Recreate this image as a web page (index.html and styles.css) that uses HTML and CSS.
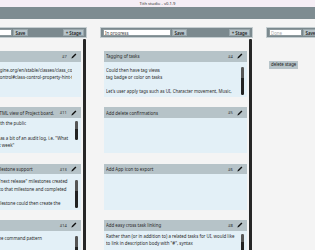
FILE: index.html
```html
<!DOCTYPE html>
<html>
<head>
<meta charset="utf-8">
<link rel="stylesheet" href="styles.css">
</head>
<body>
<div class="titlebar">Tith studio - v0.1.9</div>
<div class="toolbar"></div>
<div class="board">
  <section class="column">
    <div class="stage-head">
      <div class="stage-name stage-name-wide">Backlog</div>
      <div class="btn">Save</div>
      <div class="spacer"></div>
      <div class="btn">+ Stage</div>
    </div>
    <div class="stage-body">
      <div class="cards">
        <div class="card">
          <div class="card-head"><span class="card-title">Tooltip hints</span><span class="card-id">#7</span><svg class="pencil" viewBox="0 0 6 6"><path d="M0.4 5.6 L0.9 4.1 L4.4 0.6 L5.4 1.6 L1.9 5.1 Z"/></svg></div>
          <div class="card-body first"><div class="line">Docs at https://docs.godotengine.org/en/stable/classes/class_control.html</div><div class="line">org/en/stable/classes/class_control#class-control-property-hint-tooltip</div></div>
        </div>
        <div class="card">
          <div class="card-head"><span class="card-title">Generate a static read only HTML view of Project board.</span><span class="card-id">#11</span><svg class="pencil" viewBox="0 0 6 6"><path d="M0.4 5.6 L0.9 4.1 L4.4 0.6 L5.4 1.6 L1.9 5.1 Z"/></svg></div>
          <div class="card-body tight"><div class="line">So progress can be shared with the public</div><div class="line">&nbsp;</div><div class="line">The page could also then act as a bit of an audit log, i.e. "What</div><div class="line">changes happened in the last week"</div><span class="inner-scroll short"></span></div>
        </div>
        <div class="card">
          <div class="card-head"><span class="card-title">Add release planning with milestone support</span><span class="card-id">#13</span><svg class="pencil" viewBox="0 0 6 6"><path d="M0.4 5.6 L0.9 4.1 L4.4 0.6 L5.4 1.6 L1.9 5.1 Z"/></svg></div>
          <div class="card-body"><div class="line">This would let the user have "next release" milestones created</div><div class="line">and tasks could be assigned to that milestone and completed</div><div class="line">&nbsp;</div><div class="line">Completing the upcoming milestone could then create the</div><span class="inner-scroll"></span></div>
        </div>
        <div class="card">
          <div class="card-head"><span class="card-title">Undo support</span><span class="card-id">#14</span><svg class="pencil" viewBox="0 0 6 6"><path d="M0.4 5.6 L0.9 4.1 L4.4 0.6 L5.4 1.6 L1.9 5.1 Z"/></svg></div>
          <div class="card-body"><div class="line">Can be implemented using the command pattern</div><span class="inner-scroll"></span></div>
        </div>
      </div>
      <div class="vscroll"></div>
    </div>
  </section>

  <section class="column">
    <div class="stage-head">
      <div class="stage-name">In progress</div>
      <div class="btn">Save</div>
      <div class="spacer"></div>
      <div class="btn">+ Stage</div>
    </div>
    <div class="stage-body">
      <div class="cards">
        <div class="card">
          <div class="card-head"><span class="card-title">Tagging of tasks</span><span class="card-id">#4</span><svg class="pencil" viewBox="0 0 6 6"><path d="M0.4 5.6 L0.9 4.1 L4.4 0.6 L5.4 1.6 L1.9 5.1 Z"/></svg></div>
          <div class="card-body first"><div class="line">Could then have tag views</div><div class="line">tag badge or color on tasks</div><div class="line">&nbsp;</div><div class="line">Let's user apply tags such as UI, Character movement, Music,</div><span class="inner-scroll"></span></div>
        </div>
        <div class="card">
          <div class="card-head"><span class="card-title">Add delete confirmations</span><span class="card-id">#5</span><svg class="pencil" viewBox="0 0 6 6"><path d="M0.4 5.6 L0.9 4.1 L4.4 0.6 L5.4 1.6 L1.9 5.1 Z"/></svg></div>
          <div class="card-body"></div>
        </div>
        <div class="card">
          <div class="card-head"><span class="card-title">Add App icon to export</span><span class="card-id">#6</span><svg class="pencil" viewBox="0 0 6 6"><path d="M0.4 5.6 L0.9 4.1 L4.4 0.6 L5.4 1.6 L1.9 5.1 Z"/></svg></div>
          <div class="card-body"></div>
        </div>
        <div class="card">
          <div class="card-head"><span class="card-title">Add easy cross task linking</span><span class="card-id">#8</span><svg class="pencil" viewBox="0 0 6 6"><path d="M0.4 5.6 L0.9 4.1 L4.4 0.6 L5.4 1.6 L1.9 5.1 Z"/></svg></div>
          <div class="card-body tight"><div class="line">Rather than (or in addition to) a related tasks for UI, would like</div><div class="line">to link in description body with "#", syntax</div><span class="inner-scroll short"></span></div>
        </div>
      </div>
      <div class="vscroll"></div>
    </div>
  </section>

  <section class="column">
    <div class="stage-head">
      <div class="stage-name stage-name-short placeholder">Done</div>
      <div class="btn">Save</div>
      <div class="spacer"></div>
      <div class="btn">+ Stage</div>
    </div>
    <div class="stage-body empty">
      <div class="btn btn-delete">delete stage</div>
    </div>
  </section>
</div>
</body>
</html>
```
FILE: styles.css
```css
* { box-sizing: border-box; margin: 0; padding: 0; }
html, body { width: 315px; height: 250px; overflow: hidden; }
body {
  background: #f4f4f4;
  font-family: "Noto Sans", "Open Sans", sans-serif;
  font-size: 4.4px;
  color: #2a2a2a;
}
.titlebar {
  height: 7px;
  line-height: 7px;
  background: #f5eef5;
  text-align: center;
  font-size: 4.2px;
  color: #333;
}
.toolbar { height: 12px; background: #7e8c91; }
.board {
  display: flex;
  gap: 13px;
  margin-left: -66px;
  padding-top: 8px;
}
.column {
  flex: 0 0 153px;
  width: 153px;
  height: 231px;
  display: flex;
  flex-direction: column;
}
.stage-head {
  height: 11px;
  display: flex;
  align-items: center;
  gap: 1.4px;
  padding: 0 2px 0 1.5px;
  background: #7b898e;
  border: 1px solid #c4cdd0;
}
.stage-name {
  width: 68px;
  height: 7.4px;
  line-height: 6.4px;
  background: #fff;
  border: 0.6px solid #8d999d;
  padding-left: 1.5px;
  color: #444;
  white-space: nowrap;
  overflow: hidden;
}
.stage-name-wide { width: 75px; }
.stage-name-short { width: 33px; }
.placeholder { color: #a8a8a8; }
.btn {
  height: 7.4px;
  line-height: 7px;
  padding: 0 1.6px;
  background: #b7c4c9;
  border: 0.5px solid #99a6ab;
  color: #222;
  font-weight: 600;
  white-space: nowrap;
}
.spacer { flex: 1; }
.stage-body {
  flex: 1;
  display: flex;
  min-height: 0;
  padding: 1px 1px 0 4px;
  gap: 2px;
}
.cards {
  flex: 1;
  padding-top: 12px;
  display: flex;
  flex-direction: column;
  gap: 10.4px;
  overflow: hidden;
}
.vscroll {
  width: 3px;
  background: #262626;
  border-radius: 1px;
}
.card { flex: 0 0 auto; }
.card-head {
  height: 10.5px;
  display: flex;
  align-items: center;
  padding: 0 3.6px 0 2px;
  background: #b6c3c8;
  white-space: nowrap;
  overflow: hidden;
}
.card-title { flex: 1; overflow: hidden; }
.card-id { margin-right: 4.6px; font-size: 4px; }
.pencil { width: 6px; height: 6px; flex: 0 0 6px; fill: #111; }
.card-body {
  position: relative;
  height: 35.5px;
  background: #e3f0f7;
  padding: 4px 9px 0 2px;
  overflow: hidden;
}
.card-body.first { padding-top: 5px; }
.card-body.tight { padding-top: 2.5px; }
.line { line-height: 7.3px; white-space: pre; overflow: hidden; }
.inner-scroll {
  position: absolute;
  right: 3.2px;
  top: 5.5px;
  width: 2.5px;
  height: 28px;
  border-radius: 1.2px;
  background: linear-gradient(#555 0 40%, #222 40%);
}
.inner-scroll.short { top: 3.5px; height: 19px; }
.stage-body.empty { display: block; padding: 22.5px 0 0 3px; }
.btn-delete {
  display: inline-block;
  height: 8px;
  line-height: 7.6px;
  padding: 0 2px;
  font-weight: 400;
  border: none;
}
```
